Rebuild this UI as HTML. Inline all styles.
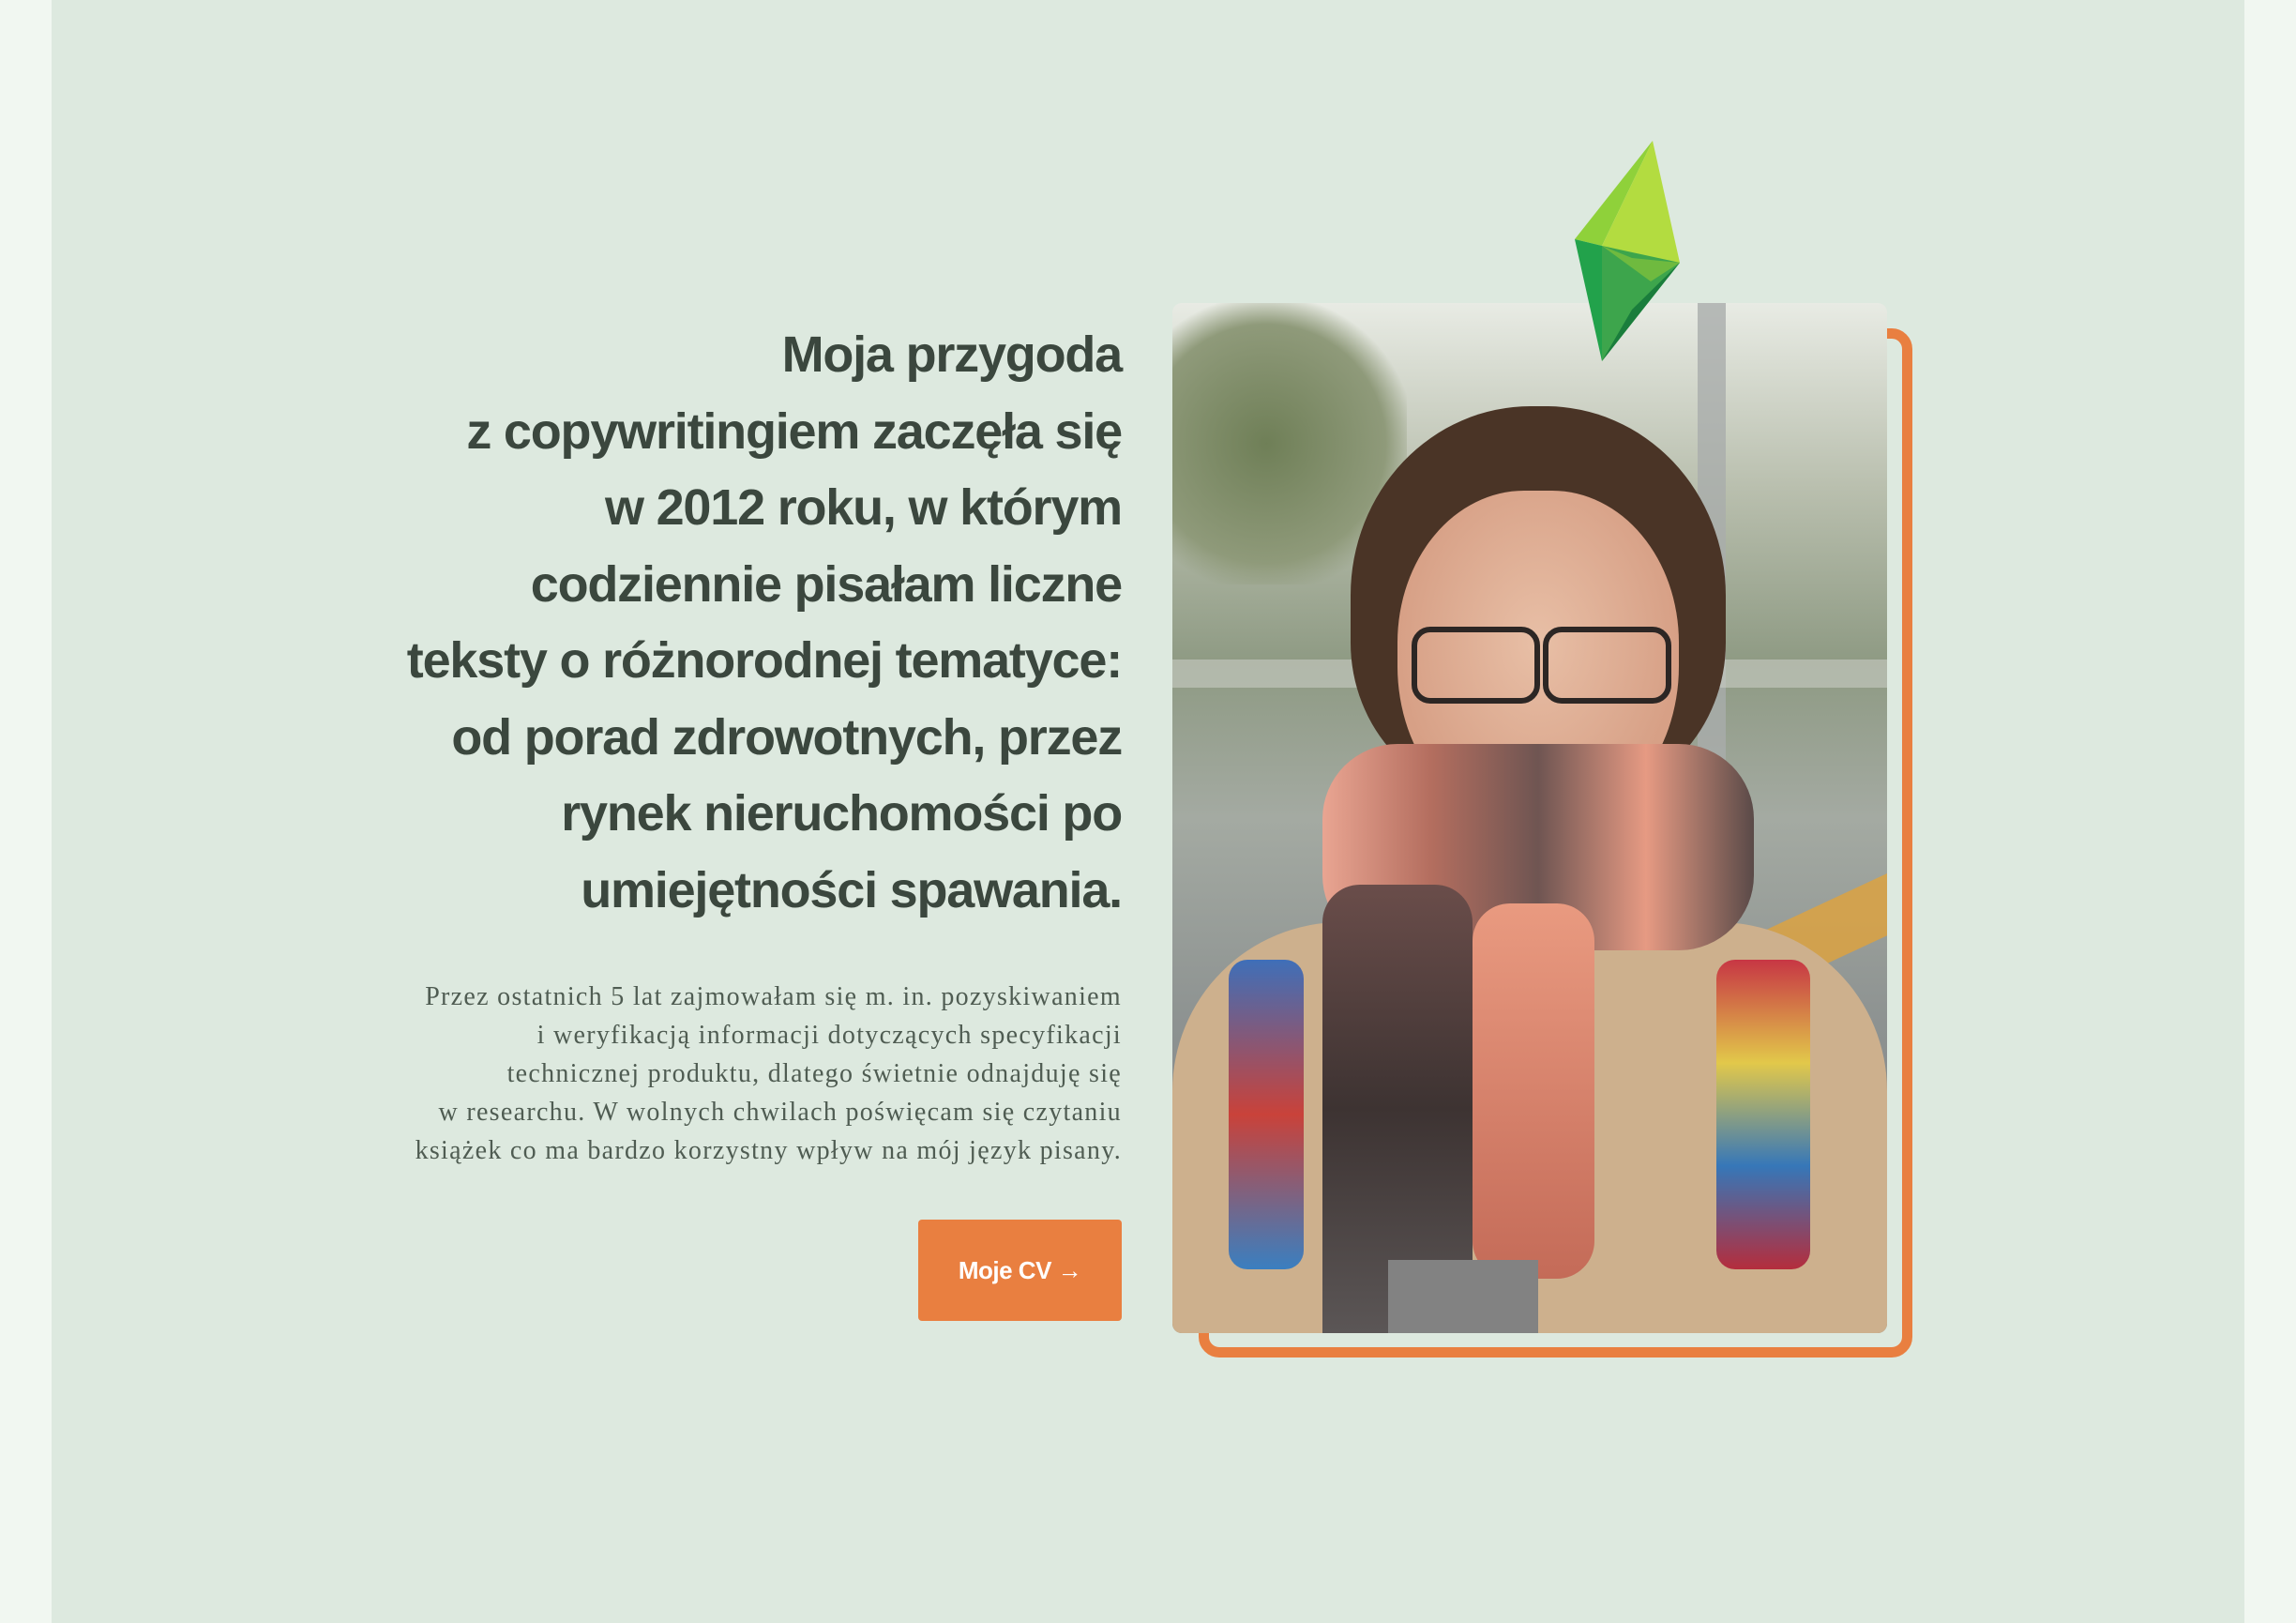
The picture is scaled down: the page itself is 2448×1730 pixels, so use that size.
<!DOCTYPE html>
<html><head><meta charset="utf-8">
<style>
html,body{margin:0;padding:0;}
body{width:2448px;height:1730px;background:#f1f7f1;position:relative;overflow:hidden;font-family:"Liberation Sans",sans-serif;}
.main{position:absolute;left:55px;top:0;width:2338px;height:1730px;background:#dde9df;}
h1{position:absolute;right:1252px;top:338px;margin:0;text-align:right;font-size:54px;line-height:81.5px;font-weight:700;color:#3b473e;letter-spacing:-1.2px;white-space:nowrap;}
p{position:absolute;right:1252px;top:1042px;margin:0;text-align:right;font-family:"Liberation Serif",serif;font-size:28px;line-height:41px;color:#4f5c52;white-space:nowrap;letter-spacing:1.3px;}
.btn{position:absolute;left:979px;top:1300px;width:217px;height:108px;background:#e97f40;border-radius:4px;color:#fff;font-weight:700;font-size:26px;display:flex;align-items:center;justify-content:center;letter-spacing:-0.5px;}
.frame{position:absolute;left:1278px;top:350px;width:739px;height:1075px;border:11px solid #e97f40;border-radius:22px;}
.photo{position:absolute;left:1250px;top:323px;width:762px;height:1098px;border-radius:10px;overflow:hidden;
background:linear-gradient(180deg,#e8ebe4 0%,#b9bfae 18%,#8e9a83 35%,#a4aaa2 50%,#8d9291 70%,#7d8285 100%);}
.photo div{position:absolute;}
</style></head><body>
<div class="main"></div>
<h1>Moja przygoda<br>z copywritingiem zaczęła się<br>w 2012 roku, w którym<br>codziennie pisałam liczne<br>teksty o różnorodnej tematyce:<br>od porad zdrowotnych, przez<br>rynek nieruchomości po<br>umiejętności spawania.</h1>
<p>Przez ostatnich 5 lat zajmowałam się m. in. pozyskiwaniem<br>i weryfikacją informacji dotyczących specyfikacji<br>technicznej produktu, dlatego świetnie odnajduję się<br>w researchu. W wolnych chwilach poświęcam się czytaniu<br>książek co ma bardzo korzystny wpływ na mój język pisany.</p>
<div class="btn">Moje CV →</div>
<div class="frame"></div>
<div class="photo">
  <div style="left:0;top:0;width:250px;height:300px;background:radial-gradient(ellipse at 40% 50%,#6f7f57,#8f9a7a 60%,transparent 75%);"></div>
  <div style="left:560px;top:0;width:30px;height:700px;background:#a9adab;opacity:.8"></div>
  <div style="left:600px;top:640px;width:200px;height:60px;background:#e0a33c;transform:rotate(-25deg);opacity:.8"></div>
  <div style="left:0;top:380px;width:762px;height:30px;background:#c9cdc4;opacity:.6"></div>
  <div style="left:0;top:660px;width:762px;height:460px;background:#cdb08d;border-radius:180px 180px 0 0;"></div>
  <div style="left:60px;top:700px;width:80px;height:330px;background:linear-gradient(#3f6fb8,#c9423a,#3a7fc0);border-radius:20px;"></div>
  <div style="left:580px;top:700px;width:100px;height:330px;background:linear-gradient(#c73644,#e2c84a,#3677b8,#b52d3c);border-radius:20px;"></div>
  <div style="left:190px;top:110px;width:400px;height:420px;background:#4a3426;border-radius:48% 48% 40% 40%;"></div>
  <div style="left:240px;top:200px;width:300px;height:360px;background:radial-gradient(ellipse at 50% 45%,#e8bfa6,#d7a086 70%);border-radius:45% 45% 48% 48%;"></div>
  <div style="left:255px;top:345px;width:125px;height:70px;border:6px solid #2c2624;border-radius:20px;"></div>
  <div style="left:395px;top:345px;width:125px;height:70px;border:6px solid #2c2624;border-radius:20px;"></div>
  <div style="left:325px;top:480px;width:100px;height:18px;background:#c27b74;border-radius:0 0 50% 50%;"></div>
  <div style="left:160px;top:470px;width:460px;height:220px;background:linear-gradient(90deg,#e9a592,#b46e5f,#6f5552,#e69a83,#5a4a48);border-radius:80px;"></div>
  <div style="left:160px;top:620px;width:160px;height:478px;background:linear-gradient(180deg,#6a4d4a,#3d3332 50%,#5b5656);border-radius:40px 40px 0 0;"></div>
  <div style="left:320px;top:640px;width:130px;height:400px;background:linear-gradient(#e99a80,#c46b58);border-radius:40px;"></div>
  <div style="left:230px;top:1020px;width:160px;height:78px;background:#828282;"></div>
</div>
<svg style="position:absolute;left:1670px;top:145px" width="130" height="250" viewBox="1670 145 130 250">
  <polygon points="1762,150 1679,255 1708,262" fill="#8fd13a"/>
  <polygon points="1762,150 1708,262 1740,275 1791,280" fill="#b3dc40"/>
  <polygon points="1679,255 1708,262 1708,385" fill="#22a24b"/>
  <polygon points="1708,262 1791,280 1708,385" fill="#3da54c"/>
  <polygon points="1708,262 1740,275 1791,280 1760,300" fill="#6fba3f"/>
  <polygon points="1740,330 1791,280 1708,385" fill="#1a7d3c"/>
</svg>
</body></html>
